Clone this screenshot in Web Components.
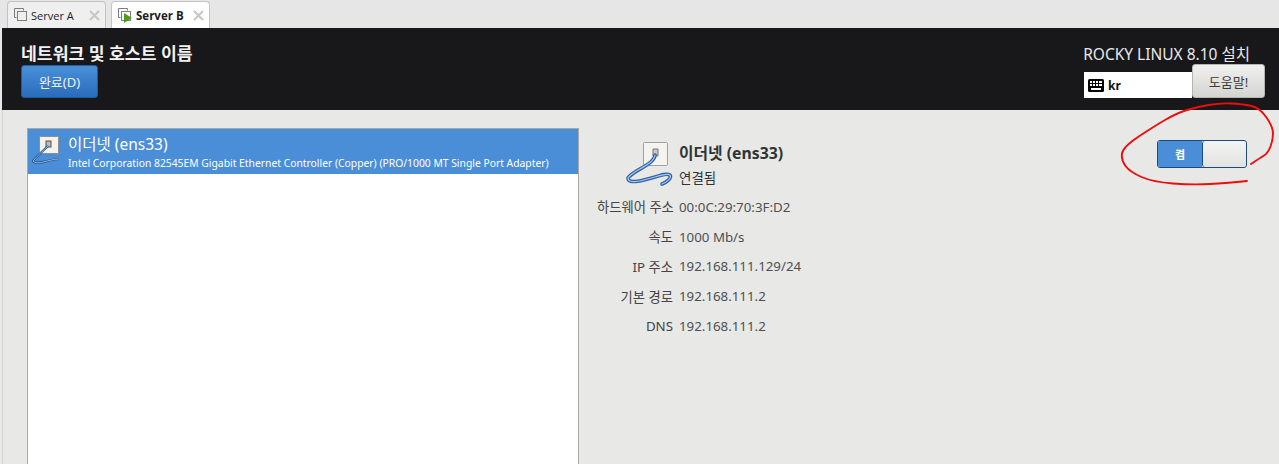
<!DOCTYPE html>
<html lang="ko">
<head>
<meta charset="utf-8">
<title>Rocky Linux</title>
<style>
html,body{margin:0;height:100%;overflow:hidden;background:#e8e8e7;}
body{font-family:"Noto Sans","Noto Sans CJK KR",sans-serif;}
</style>
</head>
<body>
<vm-window>
  <vm-tab slot="tabs" label="Server A"></vm-tab>
  <vm-tab slot="tabs" label="Server B" active></vm-tab>
  <install-header slot="header" title="네트워크 및 호스트 이름" product="ROCKY LINUX 8.10 설치"></install-header>
  <device-list slot="left"></device-list>
  <device-detail slot="right"></device-detail>
</vm-window>
<script>
const FONT = '"Noto Sans","Noto Sans CJK KR",sans-serif';

// red pen mark round the switch, points read off the screenshot
const penPoints = [[136,64],[145,58],[153,53],[158,40],[158,27],[145,8],[128,4],[105,3],[82,7],[62,13],[38,27],[8,47],[6,60],[15,72],[38,82],[78,85],[112,83],[132,81]];
function penPath(p){
    let d = `M${p[0][0]} ${p[0][1]}`;
    for(let i=1;i<p.length-1;i++){
        const mx = (p[i][0]+p[i+1][0])/2, my = (p[i][1]+p[i+1][1])/2;
        d += ` Q${p[i][0]} ${p[i][1]} ${mx} ${my}`;
    }
    const e = p[p.length-1];
    return d + ` L${e[0]} ${e[1]}`;
}

class VmWindow extends HTMLElement {
    constructor(){
        super();
        this.attachShadow({mode:'open'});
    }
    connectedCallback(){
        this.shadowRoot.innerHTML = `
        <style>
        :host{display:flex;flex-direction:column;position:relative;width:1279px;height:464px;overflow:hidden;background:#e8e8e7;font-family:${FONT};}
        .tabs{display:flex;gap:5px;height:28px;box-sizing:border-box;padding:1px 0 0 7px;background:#e6e6e6;}
        .main{flex:1;display:flex;min-height:0;margin-left:2px;padding:18px 0 0 24px;background:#e8e8e7;border-left:1px solid #d4d4d4;}
        .head{margin-left:2px;}
        .left{width:552px;flex:none;}
        .right{flex:1;}
        svg{position:absolute;left:1115px;top:100px;pointer-events:none;}
        </style>
        <div class="tabs"><slot name="tabs"></slot></div>
        <div class="head"><slot name="header"></slot></div>
        <div class="main">
            <div class="left"><slot name="left"></slot></div>
            <div class="right"><slot name="right"></slot></div>
        </div>
        <svg width="164" height="90" viewBox="0 0 164 90" fill="none">
            <path d="${penPath(penPoints)}" stroke="#ee0c0c" stroke-width="1.9" stroke-linecap="round" stroke-linejoin="round"/>
        </svg>
        `;
    }
}

class VmTab extends HTMLElement {
    constructor(){
        super();
        this.attachShadow({mode:'open'});
    }
    connectedCallback(){
        const active = this.hasAttribute('active');
        this.shadowRoot.innerHTML = `
        <style>
        :host{display:flex;align-items:center;box-sizing:border-box;height:27px;width:99px;padding:0 5px;border:1px solid #c4c4c4;border-bottom:none;border-radius:4px 4px 0 0;background:${active?'#fff':'#efefef'};font:${active?'700 11.5px':'400 11px'} "Open Sans","Liberation Sans",sans-serif;color:#1c1c1c;}
        .icon{flex:none;margin-right:${active?4:3}px;}
        .label{flex:1;white-space:nowrap;}
        .close{flex:none;}
        </style>
        <svg class="icon" width="15" height="16" viewBox="0 0 15 16" fill="none" stroke="#7d7d7d" stroke-width="1">
            <path d="M3.5 10.5h-2v-9h9v2"/><rect x="4.5" y="4.5" width="9" height="9" fill="${active?'#fff':'none'}"/>
            ${active?'<path d="M7 6l8 5-8 5z" fill="#4f9a1c" stroke="none"/>':''}
        </svg>
        <span class="label">${this.getAttribute('label')}</span>
        <svg class="close" width="11" height="11" viewBox="0 0 11 11" stroke="#c6c6c6" stroke-width="2"><path d="M1 1l9 9M10 1l-9 9"/></svg>
        `;
    }
}

class InstallHeader extends HTMLElement {
    constructor(){
        super();
        this.attachShadow({mode:'open'});
    }
    connectedCallback(){
        this.shadowRoot.innerHTML = `
        <style>
        :host{display:flex;justify-content:space-between;box-sizing:border-box;height:82px;padding:14px 14px 0 19px;background:#18181a;color:#fff;font-family:${FONT};}
        h1{margin:0;font-size:17.2px;line-height:23px;font-weight:700;color:#f2f2f2;white-space:nowrap;}
        .done{display:flex;align-items:center;justify-content:center;box-sizing:border-box;width:77px;height:33px;border:1px solid #1c5da0;border-radius:3px;background:linear-gradient(#4a90d9,#2a6cbb);color:#eaf2fb;font-size:13px;}
        .right{display:flex;flex-direction:column;align-items:flex-end;margin-top:-1px;}
        .product{font-size:15.5px;line-height:26px;margin-right:15px;color:#e8e8e8;white-space:nowrap;}
        .row{display:flex;align-items:flex-end;margin-top:-3px;}
        .kbd{display:flex;align-items:center;gap:4px;box-sizing:border-box;width:108px;height:26px;padding-left:4px;background:#fff;color:#111;font-weight:700;font-size:12px;}
        .help{display:flex;align-items:center;justify-content:center;box-sizing:border-box;width:73px;height:34px;border:1px solid #b5b5b2;border-radius:3px;background:linear-gradient(#f0f0ee,#d4d4d1);color:#3c3c3c;font-size:13px;}
        </style>
        <div>
            <h1>${this.getAttribute('title')}</h1>
            <div class="done">완료(D)</div>
        </div>
        <div class="right">
            <div class="product">${this.getAttribute('product')}</div>
            <div class="row">
                <div class="kbd">
                    <svg width="16" height="13" viewBox="0 0 16 13"><rect width="16" height="13" rx="1.5" fill="#000"/><g fill="#fff"><rect x="2" y="2" width="2" height="2"/><rect x="5" y="2" width="2" height="2"/><rect x="8" y="2" width="2" height="2"/><rect x="11" y="2" width="3" height="2"/><rect x="2" y="5" width="2" height="2"/><rect x="5" y="5" width="2" height="2"/><rect x="8" y="5" width="2" height="2"/><rect x="11" y="5" width="3" height="2"/><rect x="3" y="9" width="10" height="2"/></g></svg>
                    <span>kr</span>
                </div>
                <div class="help">도움말!</div>
            </div>
        </div>
        `;
    }
}

class DeviceList extends HTMLElement {
    constructor(){
        super();
        this.attachShadow({mode:'open'});
    }
    connectedCallback(){
        this.shadowRoot.innerHTML = `
        <style>
        :host{display:block;box-sizing:border-box;height:400px;border:1px solid #a9a9a6;background:#fff;font-family:${FONT};}
        .item{display:flex;box-sizing:border-box;height:45px;padding:5px 0 0 4px;background:#4a8ed8;color:#fff;}
        .icon{flex:none;width:36px;margin-top:1px;}
        .name{font-size:15.5px;line-height:20px;}
        .desc{font-size:10.33px;line-height:13px;margin-top:3px;white-space:nowrap;}
        </style>
        <div class="item">
            <svg class="icon" width="36" height="34" viewBox="0 0 36 34" fill="none">
                <rect x="7.5" y="1.5" width="19" height="17" rx="1" fill="#f4f3ee" stroke="#8e8e8a"/>
                <rect x="14" y="6" width="5" height="6" fill="#b9b9b5" stroke="#555"/>
                <path d="M16 11 C11 16 5 21 1 26 C5 31 17 24 27 24" stroke="#24538c" stroke-width="2.2"/>
                <path d="M16 11 C11 16 5 21 1 26 C5 31 17 24 27 24" stroke="#9dc0ea" stroke-width="0.9"/>
            </svg>
            <div>
                <div class="name">이더넷 (ens33)</div>
                <div class="desc">Intel Corporation 82545EM Gigabit Ethernet Controller (Copper) (PRO/1000 MT Single Port Adapter)</div>
            </div>
        </div>
        `;
    }
}

class DeviceDetail extends HTMLElement {
    constructor(){
        super();
        this.attachShadow({mode:'open'});
    }
    connectedCallback(){
        const rows = [
            ['하드웨어 주소','00:0C:29:70:3F:D2'],
            ['속도','1000 Mb/s'],
            ['IP 주소','192.168.111.129/24'],
            ['기본 경로','192.168.111.2'],
            ['DNS','192.168.111.2']
        ].map(r => `<div class="k">${r[0]}</div><div class="v">${r[1]}</div>`).join('');
        this.shadowRoot.innerHTML = `
        <style>
        :host{display:flex;justify-content:space-between;box-sizing:border-box;padding:12px 32px 0 0;color:#2e3436;font-family:${FONT};}
        .info{margin-left:18px;}
        .top{display:flex;gap:4px;margin-left:28px;}
        .title{font-size:15.8px;font-weight:700;line-height:22px;margin-top:2px;}
        .state{font-size:13.5px;line-height:22px;margin-top:3px;}
        .grid{display:grid;grid-template-columns:76px auto;column-gap:6px;grid-auto-rows:29.75px;align-items:center;font-size:13.3px;margin-top:2px;}
        .k{text-align:right;white-space:nowrap;color:#444;}
        .v{color:#4d5053;}
        .switch{display:flex;box-sizing:border-box;width:90px;height:28px;border:1px solid #1b4a7c;border-radius:3px;overflow:hidden;}
        .on{flex:none;width:44px;display:flex;align-items:center;justify-content:center;background:#4a8ed8;color:#fff;font-size:11px;font-weight:700;}
        .knob{flex:1;border-left:1px solid #1b4a7c;border-radius:3px;background:linear-gradient(#f4f4f4,#e2e2e0);}
        </style>
        <div class="info">
            <div class="top">
                <svg width="50" height="50" viewBox="0 0 50 50" fill="none">
                    <rect x="18.5" y="2.5" width="24" height="23" rx="1" fill="#f4f3ee" stroke="#a0a09c"/>
                    <path d="M28 9h5v7h-5z" fill="#c9c9c6" stroke="#777"/>
                    <path d="M30 15 C29 25 8 30 3 38 C3 45 20 40 30 37 C36 35 42 33 45 35 C47 38 42 42 37 44" stroke="#2f62a6" stroke-width="3.6" stroke-linecap="round"/>
                    <path d="M30 15 C29 25 8 30 3 38 C3 45 20 40 30 37 C36 35 42 33 45 35 C47 38 42 42 37 44" stroke="#a9c8ec" stroke-width="1.2" stroke-linecap="round"/>
                </svg>
                <div>
                    <div class="title">이더넷 (ens33)</div>
                    <div class="state">연결됨</div>
                </div>
            </div>
            <div class="grid">${rows}</div>
        </div>
        <div class="switch"><div class="on">켬</div><div class="knob"></div></div>
        `;
    }
}

customElements.define('vm-window', VmWindow);
customElements.define('vm-tab', VmTab);
customElements.define('install-header', InstallHeader);
customElements.define('device-list', DeviceList);
customElements.define('device-detail', DeviceDetail);
</script>
</body>
</html>
